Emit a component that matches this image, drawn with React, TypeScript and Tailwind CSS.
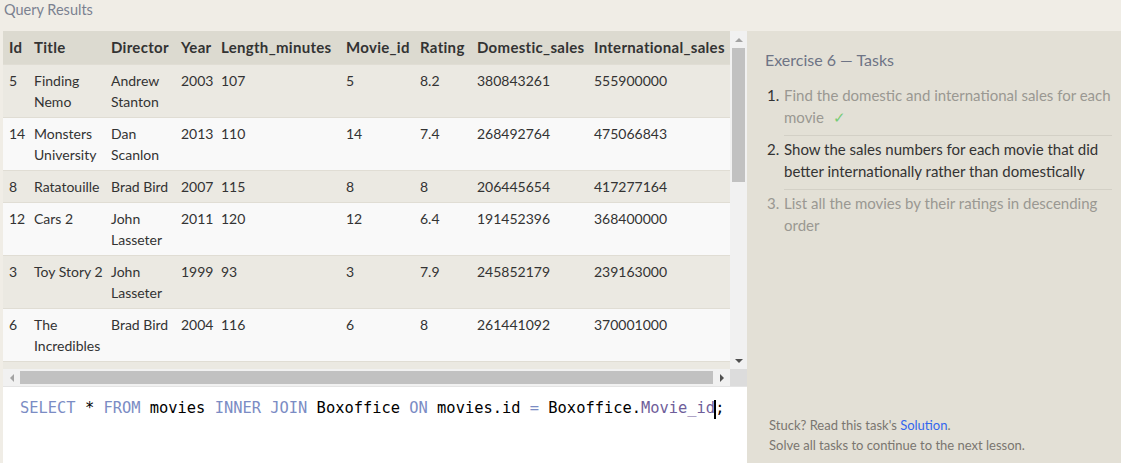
const columns = [
  { key: 'Id', w: 'w-[25px]' },
  { key: 'Title', w: 'w-[77px]' },
  { key: 'Director', w: 'w-[70px]' },
  { key: 'Year', w: 'w-[40px]' },
  { key: 'Length_minutes', w: 'w-[125px]' },
  { key: 'Movie_id', w: 'w-[74px]' },
  { key: 'Rating', w: 'w-[57px]' },
  { key: 'Domestic_sales', w: 'w-[117px]' },
  { key: 'International_sales', w: 'w-[160px]' },
];

const rows: string[][][] = [
  [['5'], ['Finding', 'Nemo'], ['Andrew', 'Stanton'], ['2003'], ['107'], ['5'], ['8.2'], ['380843261'], ['555900000']],
  [['14'], ['Monsters', 'University'], ['Dan', 'Scanlon'], ['2013'], ['110'], ['14'], ['7.4'], ['268492764'], ['475066843']],
  [['8'], ['Ratatouille'], ['Brad Bird'], ['2007'], ['115'], ['8'], ['8'], ['206445654'], ['417277164']],
  [['12'], ['Cars 2'], ['John', 'Lasseter'], ['2011'], ['120'], ['12'], ['6.4'], ['191452396'], ['368400000']],
  [['3'], ['Toy Story 2'], ['John', 'Lasseter'], ['1999'], ['93'], ['3'], ['7.9'], ['245852179'], ['239163000']],
  [['6'], ['The', 'Incredibles'], ['Brad Bird'], ['2004'], ['116'], ['6'], ['8'], ['261441092'], ['370001000']],
  [['7'], ['Cars'], ['John', 'Lasseter'], ['2006'], ['117'], ['7'], ['7.2'], ['244082982'], ['217900167']],
];

const tasks = [
  { n: '1.', text: 'Find the domestic and international sales for each movie', done: true, active: false },
  { n: '2.', text: 'Show the sales numbers for each movie that did better internationally rather than domestically', done: false, active: true },
  { n: '3.', text: 'List all the movies by their ratings in descending order', done: false, active: false },
];

function ResultsTable() {
  return (
    <table className="w-[745px] table-fixed border-collapse text-[14px] leading-[21px] text-[#333]">
      <thead>
        <tr className="bg-[#dcdad0]">
          {columns.map((c) => (
            <th
              key={c.key}
              className={`${c.w} h-[33px] pl-[6px] pr-[2px] text-left text-[15px] font-bold tracking-[0.3px] whitespace-nowrap`}
            >
              {c.key}
            </th>
          ))}
        </tr>
      </thead>
      <tbody>
        {rows.map((row, i) => (
          <tr key={i} className={`${i % 2 === 0 ? 'bg-[#ebe9e2]' : 'bg-[#f9f9f9]'} border-t border-[#e0ddd4]`}>
            {row.map((cell, j) => (
              <td key={j} className="pl-[6px] pr-[2px] pt-[5px] pb-[5px] align-top whitespace-nowrap">
                {cell.map((line, k) => (
                  <div key={k}>{line}</div>
                ))}
              </td>
            ))}
          </tr>
        ))}
      </tbody>
    </table>
  );
}

function VScrollbar() {
  return (
    <div className="flex w-[17px] flex-col items-center bg-[#f1f1f1]">
      <div className="flex h-[17px] w-full items-center justify-center">
        <div className="h-0 w-0 border-x-[4px] border-b-[4px] border-x-transparent border-b-[#a3a3a3]" />
      </div>
      <div className="h-[134px] w-[13px] bg-[#c1c1c1]" />
      <div className="flex-1" />
      <div className="flex h-[17px] w-full items-center justify-center">
        <div className="h-0 w-0 border-x-[4px] border-t-[4px] border-x-transparent border-t-[#505050]" />
      </div>
    </div>
  );
}

function HScrollbar() {
  return (
    <div className="flex h-[17px]">
      <div className="flex w-[727px] items-center bg-[#f1f1f1]">
        <div className="flex h-full w-[17px] items-center justify-center">
          <div className="h-0 w-0 border-y-[4px] border-r-[4px] border-y-transparent border-r-[#a3a3a3]" />
        </div>
        <div className="h-[13px] w-[693px] bg-[#c1c1c1]" />
        <div className="flex-1" />
        <div className="flex h-full w-[17px] items-center justify-center">
          <div className="h-0 w-0 border-y-[4px] border-l-[4px] border-y-transparent border-l-[#505050]" />
        </div>
      </div>
      <div className="w-[17px] bg-[#dcdcdc]" />
    </div>
  );
}

function Editor() {
  const kw = 'text-[#7b8cc4]';
  return (
    <div className="flex-1 border-t border-[#e4e4e4] bg-white pl-[17px] pt-[10px]">
      <div className="whitespace-pre font-['DejaVu_Sans_Mono',monospace] text-[15.4px] leading-[22px] text-black">
        <span className={kw}>SELECT</span> * <span className={kw}>FROM</span> movies <span className={kw}>INNER</span>{' '}
        <span className={kw}>JOIN</span> Boxoffice <span className={kw}>ON</span> movies.id <span className={kw}>=</span>{' '}
        Boxoffice.<span className="text-[#6f5e9a]">Movie_id</span>
        <span className="relative">
          <span className="absolute left-[-1px] top-[1px] h-[19px] w-[2px] bg-black" />
          ;
        </span>
      </div>
    </div>
  );
}

function TaskPanel() {
  return (
    <div className="flex flex-1 flex-col bg-[#e3e0d6] pl-[18px] pr-[9px] pt-[17px] pb-[8px]">
      <h2 className="text-[16px] leading-[24px] text-[#6e7485]">Exercise 6 — Tasks</h2>
      <ol className="mt-[10px] text-[15px] leading-[22px]">
        {tasks.map((t, i) => (
          <li key={t.n} className="flex">
            <span className={`w-[19px] pl-[2px] pt-[2px] ${t.active || t.done ? 'text-[#333]' : 'text-[#9a9892]'}`}>{t.n}</span>
            <div
              className={`flex-1 pt-[2px] pb-[7px] ${i < tasks.length - 1 ? 'border-b border-[#d3d0c6]' : ''} ${t.active ? 'text-[#333]' : 'text-[#9a9892]'}`}
            >
              {t.text}
              {t.done && <span className="ml-[9px] text-[#77cc77]">✓</span>}
            </div>
          </li>
        ))}
      </ol>
      <div className="mt-auto pl-[4px] text-[13px] leading-[20px] text-[#7a7670]">
        <p>
          Stuck? Read this task's <span className="text-[#3366ee]">Solution</span>.
        </p>
        <p>Solve all tasks to continue to the next lesson.</p>
      </div>
    </div>
  );
}

export default function App() {
  return (
    <div className="flex h-[463px] w-[1121px] flex-col overflow-hidden bg-[#f0ede6] font-['Lato','Noto_Sans',sans-serif]">
      <div className="h-[31px] pl-[4px] text-[14.5px] leading-[20px] text-[#7b8190]">Query Results</div>
      <div className="flex min-h-0 flex-1">
        <div className="ml-[3px] flex w-[744px] flex-col">
          <div className="flex h-[338px]">
            <div className="w-[727px] overflow-hidden">
              <ResultsTable />
            </div>
            <VScrollbar />
          </div>
          <HScrollbar />
          <Editor />
        </div>
        <TaskPanel />
      </div>
    </div>
  );
}
